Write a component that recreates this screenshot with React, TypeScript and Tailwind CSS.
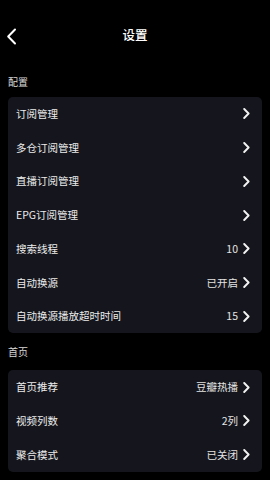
import React from "react";

const Chevron = () => (
  <svg width="7" height="11" viewBox="0 0 7 11" className="shrink-0">
    <path d="M1.2 1 L5.6 5.5 L1.2 10" fill="none" stroke="#f2f2f2" strokeWidth="1.9" strokeLinecap="round" strokeLinejoin="round" />
  </svg>
);

type Row = { label: string; value?: string };

const Card = ({ rows }: { rows: Row[] }) => (
  <div className="mx-[8px] rounded-[5px] bg-[#15161d]">
    {rows.map((r) => (
      <div key={r.label} className="flex h-[33.75px] items-center pl-[8px] pr-[12px]">
        <span className="flex-1 text-[10.5px] leading-[14px] text-[#ececec]">{r.label}</span>
        {r.value && <span className="mr-[5px] text-[10.5px] leading-[14px] text-[#e4e4e4]">{r.value}</span>}
        <Chevron />
      </div>
    ))}
  </div>
);

export default function App() {
  return (
    <div
      className="w-[270px] h-[480px] overflow-hidden bg-black"
      style={{ fontFamily: '"Noto Sans CJK SC", "Noto Sans", sans-serif' }}
    >
      <div className="relative flex h-[70px] items-center justify-center">
        <svg width="11" height="17" viewBox="0 0 11 17" className="absolute left-[6px] top-[28px]">
          <path d="M9 1.5 L2.2 8.5 L9 15.5" fill="none" stroke="#ffffff" strokeWidth="2" strokeLinecap="round" strokeLinejoin="round" />
        </svg>
        <span className="text-[12.5px] font-medium leading-[16px] text-white">设置</span>
      </div>
      <div className="h-[27px] pl-[8px] pt-[5px] text-[10px] leading-[14px] text-[#d8d8d8]">配置</div>
      <Card
        rows={[
          { label: "订阅管理" },
          { label: "多仓订阅管理" },
          { label: "直播订阅管理" },
          { label: "EPG订阅管理" },
          { label: "搜索线程", value: "10" },
          { label: "自动换源", value: "已开启" },
          { label: "自动换源播放超时时间", value: "15" },
        ]}
      />
      <div className="h-[37px] pl-[8px] pt-[12px] text-[10px] leading-[14px] text-[#d8d8d8]">首页</div>
      <Card
        rows={[
          { label: "首页推荐", value: "豆瓣热播" },
          { label: "视频列数", value: "2列" },
          { label: "聚合模式", value: "已关闭" },
        ]}
      />
    </div>
  );
}
